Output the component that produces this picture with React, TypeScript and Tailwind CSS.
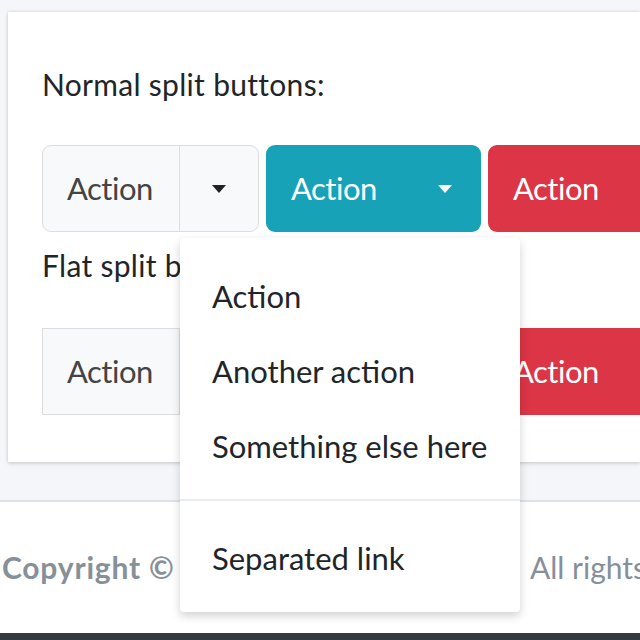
import React from "react";

function Caret({ className }: { className: string }) {
  return (
    <svg width="14" height="8" viewBox="0 0 14 8" className={className}>
      <path d="M0 0 L14 0 L7 8 Z" fill="currentColor" />
    </svg>
  );
}

export default function App() {
  const font = { fontFamily: "Lato, 'Open Sans', sans-serif" };
  return (
    <div className="relative w-[640px] h-[640px] overflow-hidden bg-[#f4f6f9]" style={font}>
      <div className="pt-[12px] pl-[8px] h-[500px] flex flex-col">
        <div className="bg-white h-[450px] shadow-[0_0_3px_rgba(0,0,0,0.15),0_2px_4px_rgba(0,0,0,0.1)] pl-[34px] pt-[51px] whitespace-nowrap">
          <p className="text-[30px] leading-[42px] tracking-[0.3px] text-[#212529]">Normal split buttons:</p>
          <div className="flex mt-[40px] gap-[7px]">
            <div className="flex shrink-0 h-[87px] rounded-[9px] border border-[#ddd] bg-[#f8f9fa] text-[#444]">
              <span className="w-[137px] flex items-center pl-[24px] text-[31px] tracking-[-0.5px] border-r border-[#ddd]">Action</span>
              <span className="w-[78px] flex items-center justify-center"><Caret className="text-[#222]" /></span>
            </div>
            <div className="flex shrink-0 h-[87px] w-[215px] rounded-[9px] bg-[#17a2b8] text-white">
              <span className="w-[150px] flex items-center pl-[25px] text-[31px] tracking-[-0.5px]">Action</span>
              <span className="flex-1 flex items-center justify-start pl-[22px]"><Caret className="text-white" /></span>
            </div>
            <div className="flex shrink-0 h-[87px] w-[200px] rounded-[9px] bg-[#dc3545] text-white">
              <span className="flex items-center pl-[25px] text-[31px] tracking-[-0.5px]">Action</span>
            </div>
          </div>
          <p className="text-[30px] leading-[42px] tracking-[0.3px] text-[#212529] mt-[12px]">Flat split buttons:</p>
          <div className="flex mt-[42px] gap-[7px]">
            <div className="flex shrink-0 h-[87px] border border-[#ddd] bg-[#f8f9fa] text-[#444]">
              <span className="w-[137px] flex items-center pl-[24px] text-[31px] tracking-[-0.5px] border-r border-[#ddd]">Action</span>
              <span className="w-[78px] flex items-center justify-center"><Caret className="text-[#222]" /></span>
            </div>
            <div className="flex shrink-0 h-[87px] w-[215px] bg-[#17a2b8] text-white">
              <span className="w-[150px] flex items-center pl-[25px] text-[31px] tracking-[-0.5px]">Action</span>
            </div>
            <div className="flex shrink-0 h-[87px] w-[200px] bg-[#dc3545] text-white">
              <span className="flex items-center pl-[25px] text-[31px] tracking-[-0.5px]">Action</span>
            </div>
          </div>
        </div>
      </div>
      <div className="h-[133px] bg-white border-t-[2px] border-[#dee2e6] flex items-center text-[30px] text-[#869099] whitespace-nowrap pl-[2px]">
        <span className="font-bold tracking-[0.8px] w-[514px] shrink-0 overflow-hidden">Copyright © 2014-2021 AdminLTE.io.</span>
        <span className="shrink-0 ml-[14px]">All rights reserved.</span>
      </div>
      <div className="h-[8px] bg-[#343a40]" />
      <div className="absolute left-[180px] top-[238px] w-[340px] h-[374px] bg-white shadow-[0_4px_10px_rgba(0,0,0,0.18)] rounded-[4px] text-[31px] text-[#212529] pt-[21px]">
        <div className="pl-[32px] h-[75px] leading-[75px]">Action</div>
        <div className="pl-[32px] h-[75px] leading-[75px]">Another action</div>
        <div className="pl-[32px] h-[75px] leading-[75px]">Something else here</div>
        <div className="mt-[15px] border-t-[2px] border-[#e9ecef]" />
        <div className="pl-[32px] h-[75px] leading-[75px] mt-[20px]">Separated link</div>
      </div>
    </div>
  );
}
